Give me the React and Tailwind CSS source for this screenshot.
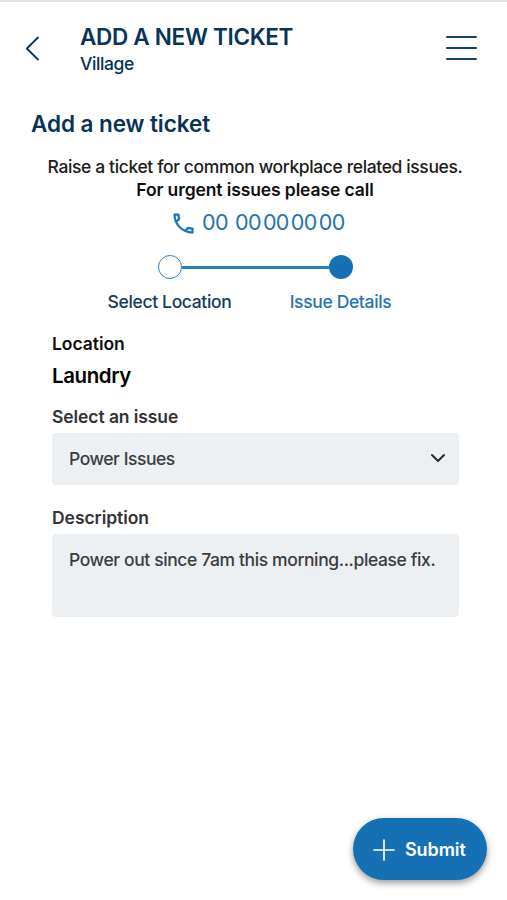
function Header() {
  return (
    <header className="flex h-[96px] items-start border-t-2 border-[#e2e2e2] pl-[25px] pr-[30px] text-[#083358]">
      <button aria-label="Back" className="mt-[34px]">
        <svg width="15" height="26" viewBox="0 0 15 26" fill="none" stroke="currentColor" strokeWidth="1.8" strokeLinecap="round" strokeLinejoin="round">
          <path d="M13 1.5 1.8 12.5 13 23.5" />
        </svg>
      </button>
      <div className="ml-[40px] flex-1 whitespace-nowrap">
        <h1 className="mt-[21px] text-[22.5px] font-semibold leading-[28px] tracking-[-0.3px]">ADD A NEW TICKET</h1>
        <p className="text-[17.5px] font-[450] leading-[25px] tracking-[-0.4px]">Village</p>
      </div>
      <button aria-label="Menu" className="mt-[34px] flex w-[31px] flex-col gap-[9px]">
        <span className="h-[2px] w-full rounded-full bg-[#124468]" />
        <span className="h-[2px] w-full rounded-full bg-[#124468]" />
        <span className="h-[2px] w-full rounded-full bg-[#124468]" />
      </button>
    </header>
  );
}

function Stepper() {
  return (
    <div className="mt-[20px] flex justify-center tracking-[-0.35px]">
      <div className="ml-[3px] w-[342px]">
        <div className="mx-auto flex w-[195px] items-center">
          <span className="h-[24px] w-[24px] rounded-full border-[1.5px] border-[#2f7fbb]" />
          <span className="h-[3px] flex-1 bg-[#2b7cb9]" />
          <span className="h-[24px] w-[24px] rounded-full bg-[#1671b4]" />
        </div>
        <div className="mt-[11px] grid grid-cols-2 text-center text-[17.5px] font-[450] leading-[24px]">
          <span className="text-[#143c5c]">Select Location</span>
          <span className="text-[#2674b0]">Issue Details</span>
        </div>
      </div>
    </div>
  );
}

export default function App() {
  return (
    <div className="relative h-[900px] w-[507px] overflow-hidden bg-white font-['Inter','Liberation_Sans',sans-serif]">
      <Header />
      <main>
        <h2 className="mt-[14px] pl-[31px] text-[22.5px] font-semibold leading-[28px] tracking-[-0.07px] text-[#083358]">Add a new ticket</h2>
        <div className="mt-[17px] whitespace-nowrap pl-[3px] text-center text-[17.5px] leading-[23px] text-[#1c1c1c]">
          <p className="font-[450] tracking-[-0.38px]">Raise a ticket for common workplace related issues.</p>
          <p className="font-semibold tracking-[-0.11px] text-[#101010]">For urgent issues please call</p>
        </div>
        <div className="mt-[8px] flex h-[26px] items-center pl-[170px] text-[#1f74b3]">
          <svg className="mt-[2px]" width="27" height="27" viewBox="0 0 24 24" fill="currentColor">
            <path d="M6.54 5c.06.89.21 1.76.45 2.59l-1.2 1.2c-.41-1.2-.67-2.47-.76-3.79h1.51m9.86 12.02c.85.24 1.72.39 2.6.45v1.49c-1.32-.09-2.59-.35-3.8-.75l1.2-1.19M7.5 3H4c-.55 0-1 .45-1 1 0 9.390 7.610 17 17 17 .55 0 1-.45 1-1v-3.490c0-.55-.45-1-1-1-1.240 0-2.450-.2-3.570-.57-.1-.04-.21-.05-.31-.05-.26 0-.51.1-.71.29l-2.200 2.200c-2.830-1.450-5.150-3.760-6.590-6.590l2.200-2.200c.28-.28.36-.67.25-1.020C8.700 6.450 8.500 5.250 8.500 4c0-.55-.45-1-1-1z" />
          </svg>
          <span className="ml-[5px] flex gap-[7px] text-[21.5px] leading-[26px]">
            <span className="tracking-[-0.6px]">00</span>
            <span className="flex gap-[2px] tracking-[-0.6px]">
              <span>00</span><span>00</span><span>00</span><span>00</span>
            </span>
          </span>
        </div>
        <Stepper />
        <form className="ml-[52px] w-[407px] whitespace-nowrap text-[17.5px] leading-[24px]">
          <p className="mt-[18px] font-semibold tracking-[-0.05px] text-[#101010]">Location</p>
          <p className="mt-[6px] text-[20.5px] font-semibold leading-[28px] tracking-[-0.4px] text-black">Laundry</p>
          <p className="mt-[15px] font-semibold tracking-[-0.08px] text-[#333]">Select an issue</p>
          <div className="mt-[4px] flex h-[52px] items-center justify-between rounded-[4px] bg-[#ecf0f2] pl-[17px] pr-[13px] text-[#3b3d3f]">
            <span className="font-[450] tracking-[-0.45px]">Power Issues</span>
            <svg className="-mt-[2px]" width="16" height="10" viewBox="0 0 16 10" fill="none" stroke="#2c2e30" strokeWidth="2.1" strokeLinecap="round" strokeLinejoin="round">
              <path d="M2 2 8 8 14 2" />
            </svg>
          </div>
          <p className="mt-[21px] font-semibold tracking-[-0.05px] text-[#333]">Description</p>
          <div className="mt-[4px] h-[83px] rounded-[4px] bg-[#ecf0f2] pl-[17px] pt-[14px] font-[450] tracking-[-0.39px] text-[#3b3d3f]">
            Power out since 7am this morning...please fix.
          </div>
        </form>
      </main>
      <button className="absolute bottom-[20px] right-[20px] flex h-[62px] w-[134px] items-center rounded-full bg-[#1671b4] pl-[20px] text-white shadow-[0_3px_7px_rgba(0,0,0,0.4)]">
        <svg className="mt-[2px]" width="22" height="22" viewBox="0 0 22 22" fill="none" stroke="currentColor" strokeWidth="1.7" strokeLinecap="round">
          <path d="M11 1v20M1 11h20" />
        </svg>
        <span className="ml-[10px] mt-[1px] text-[18px] font-semibold leading-[24px] tracking-[-0.1px]">Submit</span>
      </button>
    </div>
  );
}
